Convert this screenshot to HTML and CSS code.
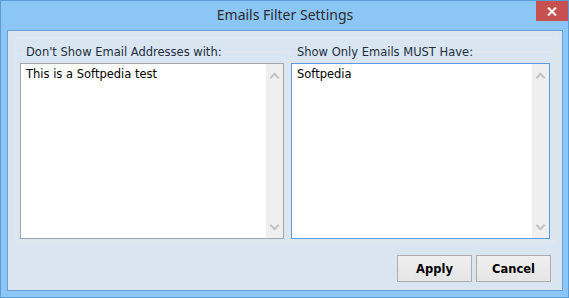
FILE: index.html
```html
<!DOCTYPE html>
<html lang="en">
<head>
    <meta charset="UTF-8">
    <title>Emails Filter Settings</title>
    <link rel="stylesheet" href="styles.css">
</head>
<body>

    <div class="window">
        <div class="titlebar">
            <span class="title">Emails Filter Settings</span>
            <div class="close-btn">
                <svg width="10" height="9" viewBox="0 0 10 9">
                    <path d="M1 0.5 L9 8.5 M9 0.5 L1 8.5" stroke="#fff" stroke-width="2"/>
                </svg>
            </div>
        </div>

        <div class="client">
            <div class="panel">
                <fieldset class="group group-left">
                    <legend>Don't Show Email Addresses with:</legend>
                    <div class="textbox">
                        <div class="text">This is a Softpedia test</div>
                        <div class="scroll">
                            <span class="chev up"></span>
                            <span class="chev down"></span>
                        </div>
                    </div>
                </fieldset>
                <fieldset class="group group-right">
                    <legend>Show Only Emails MUST Have:</legend>
                    <div class="textbox focused">
                        <div class="text">Softpedia</div>
                        <div class="scroll">
                            <span class="chev up"></span>
                            <span class="chev down"></span>
                        </div>
                    </div>
                </fieldset>
            </div>

            <div class="buttons">
                <button class="btn">Apply</button>
                <button class="btn">Cancel</button>
            </div>
        </div>
    </div>

</body>
</html>
```

FILE: styles.css
```css
body {
    margin: 0;
    font-family: "DejaVu Sans", sans-serif;
}
.window {
    width: 569px;
    height: 298px;
    box-sizing: border-box;
    background-color: #8cc6f7;
    border: 1px solid #5d9bd3;
    display: flex;
    flex-direction: column;
    padding: 0 5px 6px 6px;
}
.titlebar {
    height: 29px;
    position: relative;
    display: flex;
    align-items: center;
    justify-content: center;
}
.title {
    font-family: "Noto Sans", sans-serif;
    font-size: 14px;
    color: #2b2b2b;
    margin-top: -2px;
}
.close-btn {
    position: absolute;
    top: 0;
    right: -5px;
    width: 32px;
    height: 20px;
    background-color: #c75050;
    display: flex;
    align-items: center;
    justify-content: center;
}
.client {
    flex: 1;
    background-color: #d9e5f1;
    border: 1px solid #6f9fd0;
    display: flex;
    flex-direction: column;
    padding: 6px 5px 8px 6px;
}
.panel {
    border: 1px solid #e3e6ea;
    height: 206px;
    box-sizing: border-box;
    display: flex;
    gap: 2px;
    padding: 7px 1px 1px 1px;
}
.group {
    margin: 0;
    border: 1px solid #e3e6ea;
    min-width: 0;
    display: flex;
}
.group-left {
    width: 270px;
    box-sizing: border-box;
    padding: 0 1px 1px 3px;
}
.group-right {
    flex: 1;
    padding: 0 4px 1px 2px;
}
.group legend {
    font-size: 11.5px;
    color: #1e3040;
    padding: 0 2px;
    margin-left: 4px;
    line-height: 15px;
    margin-bottom: 0;
}
.textbox {
    flex: 1;
    background-color: #fff;
    border: 1px solid #a3a6ab;
    display: flex;
    margin-top: 3px;
}
.textbox.focused {
    border-color: #5c9be0;
}
.text {
    flex: 1;
    font-size: 11.5px;
    color: #000;
    padding: 3px 5px;
}
.scroll {
    width: 17px;
    background-color: #efefef;
    display: flex;
    flex-direction: column;
    justify-content: space-between;
    align-items: center;
    padding: 8px 0 7px;
}
.chev {
    width: 5px;
    height: 5px;
    border-left: 2px solid #c3c3c3;
    border-top: 2px solid #c3c3c3;
}
.chev.up {
    transform: rotate(45deg);
    margin-top: 2px;
}
.chev.down {
    transform: rotate(225deg);
    margin-bottom: 2px;
}
.buttons {
    display: flex;
    justify-content: flex-end;
    gap: 4px;
    margin-top: auto;
    padding-right: 6px;
}
.btn {
    width: 75px;
    height: 27px;
    border: 1px solid #acacac;
    background: linear-gradient(#f0f0f0, #e5e5e5);
    font-family: "DejaVu Sans", sans-serif;
    font-weight: bold;
    font-size: 11.5px;
    color: #000;
    padding: 0;
}
```
